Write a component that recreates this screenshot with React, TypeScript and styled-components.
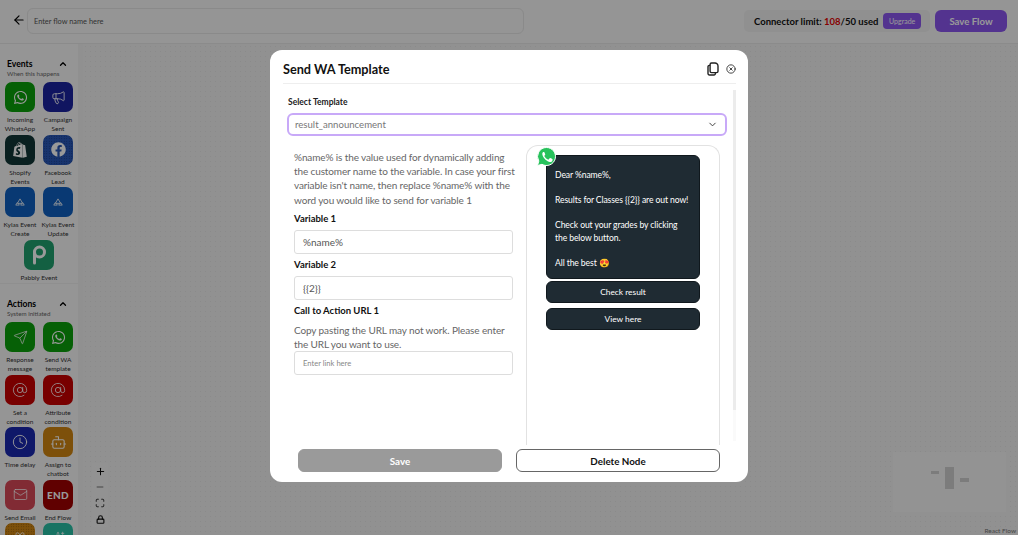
import React from 'react'
import styled, { createGlobalStyle } from 'styled-components'
import { ArrowLeft, AtSign, Bot, ChevronDown, ChevronUp, Clock, Mail, Maximize, Megaphone, Minus, Plus, Send, Lock, XCircle, Sparkles, Gift } from 'lucide-react'
import { FaWhatsapp, FaShopify, FaFacebook } from 'react-icons/fa'

const GlobalStyle = createGlobalStyle`
    html, body {
        margin: 0;
        height: 100%;
        overflow: hidden;
    }
    * {
        box-sizing: border-box;
    }
    body {
        font-family: Lato, "Open Sans", sans-serif;
        color: #111;
    }
`

const Page = styled.div`
    display: flex;
    flex-direction: column;
    height: 100vh;
    background: #f0f0f0;
`

const TopBar = styled.header`
    display: flex;
    align-items: flex-start;
    height: 44px;
    padding: 8px 11px 0 12px;
    background: #f8f8f8;
    border-bottom: 1px solid #e8e8e8;
`

const BackButton = styled.div`
    display: flex;
    width: 15px;
    height: 24px;
    align-items: center;
    color: #000;
`

const FlowName = styled.div`
    width: 497px;
    height: 26px;
    padding: 0 6px;
    display: flex;
    align-items: center;
    font-size: 7.4px;
    color: #555;
    background: #f8f8f8;
    border: 1px solid #e6e6e6;
    border-radius: 6px;
`

const TopRight = styled.div`
    display: flex;
    align-items: center;
    gap: 5px;
    margin-left: auto;
    margin-top: 2px;
`

const LimitBox = styled.div`
    display: flex;
    align-items: center;
    width: 186px;
    height: 22px;
    padding: 0 9px 0 10px;
    gap: 5px;
    background: #f0f0f0;
    border-radius: 5px;
    font-size: 9.5px;
    font-weight: 700;
    white-space: nowrap;
`

const Danger = styled.span`
    color: #e00000;
`

const Upgrade = styled.div`
    width: 38px;
    height: 16px;
    display: flex;
    align-items: center;
    justify-content: center;
    background: #8a55ee;
    color: #fff;
    font-size: 7px;
    font-weight: 400;
    border-radius: 4px;
`

const SaveFlow = styled.div`
    width: 72px;
    height: 22px;
    display: flex;
    align-items: center;
    justify-content: center;
    background: #8a55ee;
    color: #fff;
    font-size: 9.6px;
    font-weight: 700;
    border-radius: 6px;
`

const Workspace = styled.div`
    flex: 1;
    display: flex;
    min-height: 0;
`

const Sidebar = styled.aside`
    width: 78px;
    flex-shrink: 0;
    overflow: hidden;
    background: #f8f8f8;
`

const SideSection = styled.section<{ $height: number }>`
    height: ${props => props.$height}px;
    padding: 14px 5px 0;
    border-bottom: 1px solid #eeeeee;
`

const SideHead = styled.div`
    display: flex;
    align-items: center;
    justify-content: space-between;
    padding: 0 5px 0 2px;
    height: 11px;
    font-size: 8.6px;
    font-weight: 700;
    color: #000;
`

const SideSub = styled.div`
    padding-left: 2px;
    margin-bottom: 4px;
    height: 9px;
    line-height: 9px;
    font-size: 6.2px;
    color: #666;
`

const TileGrid = styled.div`
    display: grid;
    grid-template-columns: 30px 30px;
    column-gap: 8px;
    justify-content: start;
`

const TileCell = styled.div<{ $wide?: boolean }>`
    display: flex;
    flex-direction: column;
    align-items: center;
    padding-bottom: 1.5px;
    grid-column: ${props => (props.$wide ? '1 / span 2' : 'auto')};
`

const Tile = styled.div<{ $bg: string; $dots?: boolean }>`
    width: 30px;
    height: 30px;
    flex-shrink: 0;
    display: flex;
    align-items: center;
    justify-content: center;
    border-radius: 7px;
    color: #fff;
    background-color: ${props => props.$bg};
    background-image: ${props =>
        props.$dots ? 'radial-gradient(rgba(0,0,0,.35) 0.7px, transparent 0.8px)' : 'none'};
    background-size: 2.5px 2.5px;
    box-shadow: 0 0 0 1px #ffffff60;
    font-size: 10px;
    font-weight: 900;
    letter-spacing: 0.3px;
`

const TileLabel = styled.div`
    margin-top: 3px;
    width: 38px;
    min-height: 9px;
    line-height: 9px;
    font-size: 6.5px;
    text-align: center;
    color: #333;
`

const Canvas = styled.main`
    position: relative;
    flex: 1;
    margin-left: 5px;
    background-color: #f2f2f2;
    background-image: radial-gradient(#e6e6e6 0.6px, transparent 0.8px);
    background-size: 5px 5px;
`

const Controls = styled.div`
    position: absolute;
    left: 9px;
    bottom: 8px;
    display: flex;
    flex-direction: column;
`

const ControlButton = styled.div`
    width: 16px;
    height: 16px;
    display: flex;
    align-items: center;
    justify-content: center;
    background: #f4f4f4;
    color: #111;
`

const MiniMap = styled.div`
    position: absolute;
    right: 12px;
    bottom: 23px;
    width: 113px;
    height: 60px;
    display: flex;
    align-items: center;
    justify-content: center;
    gap: 6px;
    background: #f6f6f6;
`

const MiniNode = styled.div<{ $w: number; $h: number; $up?: number }>`
    width: ${props => props.$w}px;
    height: ${props => props.$h}px;
    transform: translateY(${props => props.$up ?? 0}px);
    background: #cfcfcf;
`

const Attribution = styled.div`
    position: absolute;
    right: 2px;
    bottom: 1px;
    font-size: 6.5px;
    color: #777;
`

const Overlay = styled.div`
    position: fixed;
    inset: 0;
    display: flex;
    justify-content: center;
    align-items: flex-start;
    padding-top: 50px;
    background: rgba(0, 0, 0, 0.4);
`

const Modal = styled.div`
    width: 478px;
    height: 432px;
    display: flex;
    flex-direction: column;
    padding: 0 12px 10px 13px;
    background: #fff;
    border-radius: 12px;
`

const ModalHead = styled.div`
    flex-shrink: 0;
    display: flex;
    align-items: center;
    justify-content: space-between;
    height: 34px;
    padding-top: 5px;
    border-bottom: 1px solid #eeeeee;
`

const ModalTitle = styled.h2`
    margin: 0;
    font-size: 12.7px;
    font-weight: 700;
    color: #111;
`

const HeadIcons = styled.div`
    display: flex;
    align-items: center;
    gap: 7px;
    color: #222;
`

const ModalBody = styled.div`
    position: relative;
    flex: 1;
    min-height: 0;
    overflow: hidden;
    padding: 12px 9px 0 4px;
`

const ScrollTrack = styled.div`
    position: absolute;
    top: 6px;
    right: 0;
    bottom: 4px;
    width: 3px;
    background: #fafafa;
`

const ScrollThumb = styled.div`
    height: 320px;
    background: #ececec;
`

const SelectLabel = styled.div`
    padding-left: 1px;
    font-size: 8.5px;
    font-weight: 700;
    line-height: 12px;
    margin-bottom: 5px;
    color: #222;
`

const SelectBox = styled.div`
    display: flex;
    align-items: center;
    justify-content: space-between;
    height: 23px;
    padding: 0 7px 0 6px;
    border: 2px solid #c8a9f8;
    border-radius: 6px;
    font-size: 9.6px;
    color: #777;
`

const Columns = styled.div`
    display: grid;
    grid-template-columns: 219px 194px;
    column-gap: 13px;
    padding-left: 7px;
    margin-top: 9px;
`

const FormColumn = styled.div`
    padding-top: 5px;
`

const FieldLabel = styled.div`
    height: 22px;
    line-height: 21px;
    font-size: 9.5px;
    font-weight: 700;
    color: #111;
`

const Hint = styled.p`
    margin: 0 0 1px;
    font-size: 10px;
    letter-spacing: -0.12px;
    line-height: 14.2px;
    white-space: nowrap;
    color: #666;

    ${FieldLabel} + & {
        margin: 1px 0 0;
    }
`

const TextField = styled.div<{ $placeholder?: boolean }>`
    height: 24px;
    padding: 0 8px;
    display: flex;
    align-items: center;
    border: 1px solid #dddddd;
    border-radius: 3px;
    font-size: ${props => (props.$placeholder ? '7.6px' : '10px')};
    color: ${props => (props.$placeholder ? '#888' : '#555')};
`

const PhoneFrame = styled.div`
    position: relative;
    height: 340px;
    padding: 9px 19px 0;
    border: 1px solid #e2e2e2;
    border-bottom: none;
    border-radius: 12px 12px 0 0;
`

const WaBadge = styled.svg`
    position: absolute;
    top: 0;
    left: 9px;
    width: 21px;
    height: 21px;
`

const Bubble = styled.div`
    height: 124px;
    padding: 13px 8px;
    background: #1f2b33;
    border: 1px solid #10181d;
    border-radius: 6px;
    font-size: 8.6px;
    letter-spacing: -0.1px;
    line-height: 12.5px;
    color: #fff;
    white-space: pre-line;
`

const BubbleButton = styled.div`
    height: 22px;
    margin-top: 2px;
    margin-bottom: 5px;
    display: flex;
    align-items: center;
    justify-content: center;
    background: #1f2b33;
    border: 1px solid #10181d;
    border-radius: 6px;
    font-size: 8.4px;
    color: #fff;
`

const Footer = styled.div`
    flex-shrink: 0;
    display: grid;
    grid-template-columns: 204px 204px;
    column-gap: 14px;
    padding-left: 15px;
    margin-top: 4px;
`

const FooterButton = styled.div<{ $filled?: boolean }>`
    height: 23px;
    display: flex;
    align-items: center;
    justify-content: center;
    border-radius: 6px;
    font-size: 9.8px;
    font-weight: 700;
    color: ${props => (props.$filled ? '#fff' : '#111')};
    background: ${props => (props.$filled ? '#9a9a9a' : '#fff')};
    border: 1px solid ${props => (props.$filled ? '#9a9a9a' : '#666')};
`

const KylasMark = () => (
    <svg width="10" height="8" viewBox="0 0 22 18" fill="none" stroke="#fff" strokeWidth="1.8">
        <path d="M11 2 5 12h12z" />
        <path d="M5 10 1.5 16h8L7 12" />
        <path d="M17 10l3.5 6h-8l2.5-4" />
    </svg>
)

const PabblyMark = () => (
    <svg width="16" height="20" viewBox="0 0 16 20" fill="none" stroke="#fff" strokeWidth="3" strokeLinecap="round">
        <circle cx="8.5" cy="7" r="5" />
        <path d="M3.5 7v11" />
    </svg>
)

const CopyMark = () => (
    <svg width="12" height="14" viewBox="0 0 12 14" fill="none" stroke="#222" strokeWidth="1.4" strokeLinejoin="round">
        <path d="M4.5 1h3.2a3 3 0 0 1 3.3 3v5.2a1.4 1.4 0 0 1-1.4 1.4H4.5A1.4 1.4 0 0 1 3.1 9.2V2.4A1.4 1.4 0 0 1 4.5 1z" />
        <path d="M3.1 3.4H2.3A1.3 1.3 0 0 0 1 4.7v6.9A1.4 1.4 0 0 0 2.4 13h4.2a1.6 1.6 0 0 0 1.6-2.4" />
    </svg>
)

const eventTiles = [
    { label: 'Incoming WhatsApp', bg: '#0aa00a', icon: <FaWhatsapp size={15} /> },
    { label: 'Campaign Sent', bg: '#1c24a0', icon: <Megaphone size={15} strokeWidth={1.4} /> },
    { label: 'Shopify Events', bg: '#123636', icon: <FaShopify size={16} /> },
    { label: 'Facebook Lead', bg: '#2858b8', dots: true, icon: <FaFacebook size={15} /> },
    { label: 'Kylas Event Create', bg: '#1060c0', icon: <KylasMark /> },
    { label: 'Kylas Event Update', bg: '#1060c0', icon: <KylasMark /> },
    { label: 'Pabbly Event', bg: '#20a06e', wide: true, icon: <PabblyMark /> },
]

const actionTiles = [
    { label: 'Response message', bg: '#0aa00a', icon: <Send size={15} strokeWidth={1.2} /> },
    { label: 'Send WA template', bg: '#0aa00a', icon: <FaWhatsapp size={15} /> },
    { label: 'Set a condition', bg: '#c80000', icon: <AtSign size={16} strokeWidth={1.2} /> },
    { label: 'Attribute condition', bg: '#c80000', icon: <AtSign size={16} strokeWidth={1.2} /> },
    { label: 'Time delay', bg: '#1a28b0', icon: <Clock size={16} strokeWidth={1.4} /> },
    { label: 'Assign to chatbot', bg: '#d08512', icon: <Bot size={17} strokeWidth={1.5} /> },
    { label: 'Send Email', bg: '#d84858', icon: <Mail size={15} strokeWidth={1.2} /> },
    { label: 'End Flow', bg: '#a00000', icon: 'END' },
    { label: '', bg: '#d08512', dots: true, icon: <Gift size={14} strokeWidth={1.3} /> },
    { label: '', bg: '#28c0a6', icon: <Sparkles size={14} strokeWidth={1.3} /> },
]

type TileItem = {
    label: string
    bg: string
    icon: React.ReactNode
    dots?: boolean
    wide?: boolean
}

const TileList: React.FC<{ items: TileItem[] }> = ({ items }) => (
    <TileGrid>
        {items.map((item, i) => (
            <TileCell key={i} $wide={item.wide}>
                <Tile $bg={item.bg} $dots={item.dots}>{item.icon}</Tile>
                <TileLabel>{item.label}</TileLabel>
            </TileCell>
        ))}
    </TileGrid>
)

const App: React.FC = () => {
    return (
        <Page>
            <GlobalStyle />
            <TopBar>
                <BackButton><ArrowLeft size={14} strokeWidth={2} /></BackButton>
                <FlowName>Enter flow name here</FlowName>
                <TopRight>
                    <LimitBox>
                        <span>Connector limit: <Danger>108</Danger>/50 used</span>
                        <Upgrade>Upgrade</Upgrade>
                    </LimitBox>
                    <SaveFlow>Save Flow</SaveFlow>
                </TopRight>
            </TopBar>

            <Workspace>
                <Sidebar>
                    <SideSection $height={240}>
                        <SideHead>Events<ChevronUp size={10} strokeWidth={3} /></SideHead>
                        <SideSub>When this happens</SideSub>
                        <TileList items={eventTiles} />
                    </SideSection>
                    <SideSection $height={260}>
                        <SideHead>Actions<ChevronUp size={10} strokeWidth={3} /></SideHead>
                        <SideSub>System initiated</SideSub>
                        <TileList items={actionTiles} />
                    </SideSection>
                </Sidebar>

                <Canvas>
                    <Controls>
                        <ControlButton><Plus size={11} strokeWidth={2.2} /></ControlButton>
                        <ControlButton><Minus size={10} strokeWidth={1.4} /></ControlButton>
                        <ControlButton><Maximize size={10} strokeWidth={2} /></ControlButton>
                        <ControlButton><Lock size={9} strokeWidth={3} /></ControlButton>
                    </Controls>
                    <MiniMap>
                        <MiniNode $w={8} $h={3} $up={-10} />
                        <MiniNode $w={9} $h={22} $up={-4} />
                        <MiniNode $w={9} $h={4} $up={-2} />
                    </MiniMap>
                    <Attribution>React Flow</Attribution>
                </Canvas>
            </Workspace>

            <Overlay>
                <Modal>
                    <ModalHead>
                        <ModalTitle>Send WA Template</ModalTitle>
                        <HeadIcons>
                            <CopyMark />
                            <XCircle size={10} strokeWidth={2} />
                        </HeadIcons>
                    </ModalHead>

                    <ModalBody>
                        <ScrollTrack><ScrollThumb /></ScrollTrack>
                        <SelectLabel>Select Template</SelectLabel>
                        <SelectBox>
                            result_announcement
                            <ChevronDown size={11} color="#333" strokeWidth={2} />
                        </SelectBox>
                        <Columns>
                            <FormColumn>
                                <Hint>
                                    %name% is the value used for dynamically adding<br />
                                    the customer name to the variable. In case your first<br />
                                    variable isn't name, then replace %name% with the<br />
                                    word you would like to send for variable 1
                                </Hint>
                                <FieldLabel>Variable 1</FieldLabel>
                                <TextField>%name%</TextField>
                                <FieldLabel>Variable 2</FieldLabel>
                                <TextField>{'{{2}}'}</TextField>
                                <FieldLabel>Call to Action URL 1</FieldLabel>
                                <Hint>
                                    Copy pasting the URL may not work. Please enter<br />
                                    the URL you want to use.
                                </Hint>
                                <TextField $placeholder>Enter link here</TextField>
                            </FormColumn>
                            <PhoneFrame>
                                <WaBadge viewBox="0 0 21 21">
                                    <path
                                        d="M10.5 1.5a9 9 0 0 0-7.7 13.6L1.5 19.5l4.5-1.2A9 9 0 1 0 10.5 1.5z"
                                        fill="#28c25c"
                                        stroke="#fff"
                                        strokeWidth="1"
                                    />
                                    <path
                                        d="M7.5 6c-.4 0-1.2.6-1.2 2 0 1.5 1 3 1.2 3.2.2.3 2.2 3.4 5.3 4.5 2.3.8 3-.1 3.4-.7.3-.5.5-1.3.4-1.6-.1-.2-1.9-1.2-2.3-1.3-.3-.1-.5 0-.8.4l-.8 1c-.2.2-.4.2-.7.1-1.5-.7-2.8-1.9-3.6-3.3-.1-.3 0-.5.2-.7l.6-.8c.1-.2.1-.4 0-.6L8.5 6.5c-.2-.4-.5-.5-1-.5z"
                                        fill="#fff"
                                    />
                                </WaBadge>
                                <Bubble>
                                    {'Dear %name%,\n\nResults for Classes {{2}} are out now!\n\nCheck out your grades by clicking the below button.\n\nAll the best 😍'}
                                </Bubble>
                                <BubbleButton>Check result</BubbleButton>
                                <BubbleButton>View here</BubbleButton>
                            </PhoneFrame>
                        </Columns>
                    </ModalBody>

                    <Footer>
                        <FooterButton $filled>Save</FooterButton>
                        <FooterButton>Delete Node</FooterButton>
                    </Footer>
                </Modal>
            </Overlay>
        </Page>
    )
}

export default App
